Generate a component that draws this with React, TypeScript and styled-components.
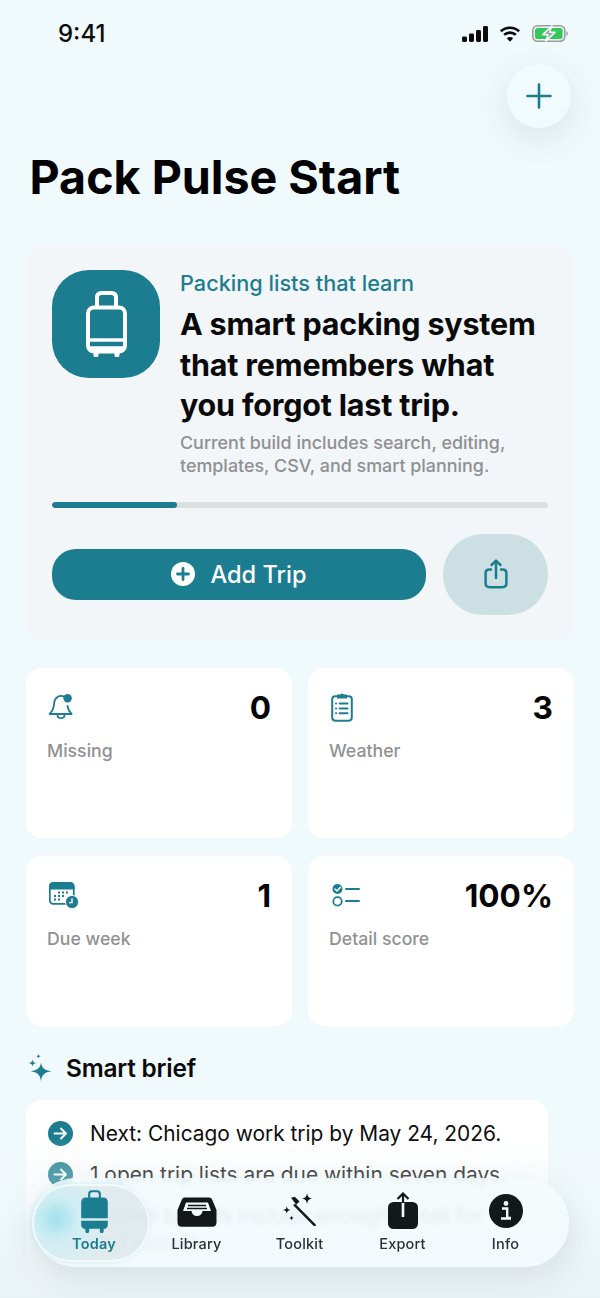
import React from "react";
import styled, { createGlobalStyle } from "styled-components";

const TEAL = "#1c7d90";
const INK = "#13191b";

const GlobalStyle = createGlobalStyle`
  html, body {
    margin: 0;
    padding: 0;
    background: #f0f9fc;
  }
  * {
    box-sizing: border-box;
  }
`;

const Screen = styled.div`
  position: relative;
  width: 600px;
  height: 1298px;
  overflow: hidden;
  background: #f0f9fc;
  font-family: Inter, "Liberation Sans", sans-serif;
  color: #000;
`;

const StatusBar = styled.div`
  display: flex;
  align-items: center;
  justify-content: space-between;
  height: 64px;
  padding: 3px 32px 0 58px;
`;

const Time = styled.span`
  font-size: 24px;
  font-weight: 500;
  line-height: 30px;
  color: #0b0b0b;
`;

const StatusIcons = styled.div`
  display: flex;
  align-items: center;
  gap: 11px;
`;

const TopRow = styled.div`
  display: flex;
  justify-content: flex-end;
  padding-right: 29px;
`;

const RoundButton = styled.div`
  display: flex;
  align-items: center;
  justify-content: center;
  width: 64px;
  height: 64px;
  border-radius: 50%;
  background: #f1fafc;
  box-shadow: 0 10px 34px rgba(60, 80, 90, 0.12);
`;

const Title = styled.h1`
  margin: 21px 0 0 0;
  padding-left: 29.5px;
  font-size: 46.6px;
  line-height: 56px;
  font-weight: 700;
`;

const Hero = styled.section`
  margin: 41px 26px 0;
  height: 394px;
  padding: 24px 26px;
  border-radius: 18px;
  background: #f3f6f8;
`;

const HeroTop = styled.div`
  display: flex;
  gap: 20px;
`;

const AppIcon = styled.div`
  display: flex;
  flex: none;
  align-items: center;
  justify-content: center;
  width: 108px;
  height: 108px;
  border-radius: 37px;
  background: ${TEAL};
`;

const HeroText = styled.div`
  display: flex;
  flex-direction: column;
`;

const Eyebrow = styled.div`
  font-size: 21.7px;
  line-height: 27px;
  font-weight: 500;
  color: ${TEAL};
`;

const Headline = styled.h2`
  margin: 7px 0 0 0;
  font-size: 30.5px;
  line-height: 40.5px;
  font-weight: 700;
  letter-spacing: -0.2px;
  color: #0a0a0a;
`;

const Note = styled.p`
  margin: 5px 0 0 0;
  font-size: 17.9px;
  line-height: 23.5px;
  font-weight: 500;
  color: #8e9093;
`;

const Track = styled.div`
  height: 6px;
  margin-top: 24px;
  border-radius: 3px;
  background: #dcdfe0;
  overflow: hidden;
`;

const Fill = styled.div`
  height: 100%;
  border-radius: 3px;
  background: ${TEAL};
`;

const Actions = styled.div`
  display: flex;
  align-items: center;
  gap: 17px;
  margin-top: 26px;
`;

const PrimaryButton = styled.div`
  display: flex;
  flex: 1;
  align-items: center;
  justify-content: center;
  gap: 15px;
  height: 51px;
  border-radius: 24px;
  background: ${TEAL};
  color: #fff;
  font-size: 23.6px;
  font-weight: 500;
`;

const ShareButton = styled.div`
  display: flex;
  flex: none;
  align-items: center;
  justify-content: center;
  width: 105px;
  height: 81px;
  border-radius: 40px;
  background: #cce0e3;
`;

const Stats = styled.div`
  display: grid;
  grid-template-columns: 266px 266px;
  grid-auto-rows: 170px;
  gap: 18px 16px;
  margin: 28px 26px 0;
`;

const StatCard = styled.div`
  padding: 20px 21px 0;
  border-radius: 16px;
  background: #fff;
`;

const StatTop = styled.div`
  display: flex;
  align-items: center;
  justify-content: space-between;
  height: 38px;
`;

const StatIcon = styled.div<{ $nudge: number }>`
  display: flex;
  margin-left: ${(p) => p.$nudge}px;
`;

const StatValue = styled.span`
  font-size: 31.6px;
  font-weight: 700;
  color: #050505;
`;

const StatLabel = styled.div`
  margin-top: 13px;
  font-size: 17.7px;
  line-height: 24px;
  font-weight: 500;
  color: #909193;
`;

const SectionHead = styled.div`
  display: flex;
  align-items: center;
  gap: 14px;
  height: 34px;
  margin: 25px 0 0 28px;
`;

const SectionTitle = styled.h3`
  margin: 0;
  font-size: 24.4px;
  font-weight: 600;
  letter-spacing: -0.2px;
  color: #0a0a0a;
`;

const BriefCard = styled.div`
  display: flex;
  flex-direction: column;
  gap: 13px;
  margin: 15px 52px 0 26px;
  height: 230px;
  padding: 20px 22px;
  border-radius: 16px;
  background: #fff;
`;

const BriefRow = styled.div`
  display: flex;
  align-items: flex-start;
  gap: 17px;
  font-size: 20.9px;
  line-height: 28px;
  color: #0d0d0d;
`;

const BadgeSlot = styled.div`
  display: flex;
  flex: none;
  margin-top: 1px;
`;

const BottomFade = styled.div`
  position: absolute;
  left: 0;
  right: 0;
  bottom: 0;
  height: 160px;
  background: linear-gradient(
    to bottom,
    rgba(240, 247, 249, 0) 0%,
    rgba(238, 244, 246, 0.25) 18%,
    rgba(236, 245, 248, 0.4) 45%,
    #e9f2f5 100%
  );
  pointer-events: none;
`;

const TabBar = styled.nav`
  position: absolute;
  left: 32px;
  top: 1178px;
  display: grid;
  grid-template-columns: 113px repeat(4, 103px);
  align-items: center;
  width: 537px;
  height: 89px;
  border-radius: 44px;
  background: rgba(243, 251, 253, 0.88);
  backdrop-filter: blur(2.5px);
  box-shadow: 0 10px 30px rgba(70, 100, 110, 0.14);
`;

const Tab = styled.div<{ $active?: boolean }>`
  position: relative;
  display: flex;
  flex-direction: column;
  align-items: center;
  justify-content: flex-end;
  width: ${(p) => (p.$active ? "118px" : "auto")};
  height: 78px;
  padding: ${(p) => (p.$active ? "0 0 9px 6px" : "0 0 9px 0")};
  border-radius: 39px;
  font-size: 14.5px;
  line-height: 18px;
  font-weight: ${(p) => (p.$active ? 600 : 500)};
  letter-spacing: 0.2px;
  color: ${(p) => (p.$active ? TEAL : "#2a3033")};
  background: ${(p) =>
    p.$active
      ? "radial-gradient(circle at 20% 45%, rgba(150, 222, 236, 0.85) 0%, rgba(190, 230, 238, 0.65) 22%, rgba(214, 226, 229, 0.6) 55%)"
      : "transparent"};
  box-shadow: ${(p) =>
    p.$active ? "inset 0 0 0 2px rgba(255, 255, 255, 0.7), -1px 0 4px rgba(150, 220, 232, 0.5)" : "none"};
`;

const TabIcon = styled.svg<{ $top?: number; $bottom: number }>`
  display: block;
  margin-top: ${(p) => p.$top ?? 0}px;
  margin-bottom: ${(p) => p.$bottom}px;
`;

const Signal = () => (
  <svg width="26" height="16" viewBox="0 0 26 16">
    <rect x="0" y="10.5" width="5" height="5.5" rx="1.4" fill="#0b0b0b" />
    <rect x="7" y="7.5" width="5" height="8.5" rx="1.4" fill="#0b0b0b" />
    <rect x="14" y="4" width="5" height="12" rx="1.4" fill="#0b0b0b" />
    <rect x="21" y="0" width="5" height="16" rx="1.4" fill="#0b0b0b" />
  </svg>
);

const Wifi = () => (
  <svg width="22" height="16" viewBox="0 0 22 17" fill="none" stroke="#0b0b0b" strokeWidth="2.8">
    <path d="M1.3 5.6C6.8 .6 15.2 .6 20.7 5.6" />
    <path d="M4.8 9.4c3.6-3.2 8.8-3.2 12.4 0" />
    <path d="M11 16.8 7.6 13c2-1.6 4.8-1.6 6.8 0z" fill="#0b0b0b" stroke="none" />
  </svg>
);

const Battery = () => (
  <svg width="36" height="17" viewBox="0 0 36 17">
    <rect x=".8" y=".8" width="32" height="15.4" rx="4.6" fill="none" stroke="#9a9d9c" strokeWidth="1.6" />
    <rect x="3" y="3" width="27.6" height="11" rx="2.6" fill="#35c759" />
    <path d="M34.4 6c1 .5 1.4 1.4 1.4 2.5s-.4 2-1.4 2.5z" fill="#9a9d9c" />
    <path d="M20 .8 10.8 9.6h5.4l-2.4 6.6 9.4-9h-5.6z" fill="#9a9d9c" stroke="#f0f9fc" strokeWidth="1.6" strokeLinejoin="round" />
  </svg>
);

const PlusIcon = () => (
  <svg width="26" height="26" viewBox="0 0 26 26" stroke={TEAL} strokeWidth="2.6" strokeLinecap="round">
    <path d="M13 1.5v23M1.5 13h23" />
  </svg>
);

const SuitcaseOutline = () => (
  <svg width="41" height="66" viewBox="0 0 41 66" fill="none" stroke="#fff">
    <path d="M11 15V6.5C11 3.5 12.8 2 15.5 2h10C28.2 2 30 3.5 30 6.5V15" strokeWidth="4" />
    <rect x="2" y="16.5" width="37" height="44" rx="6" strokeWidth="4" />
    <path d="M3 49h35" strokeWidth="3.6" />
    <path d="M3 58h35" strokeWidth="5.6" />
    <path d="M10 62v2M31 62v2" strokeLinecap="round" strokeWidth="5" />
  </svg>
);

const PlusCircle = () => (
  <svg width="24" height="24" viewBox="0 0 24 24">
    <circle cx="12" cy="12" r="12" fill="#fff" />
    <path d="M12 6.5v11M6.5 12h11" stroke={TEAL} strokeWidth="2.8" strokeLinecap="round" />
  </svg>
);

const ShareIcon = () => (
  <svg width="24" height="30" viewBox="0 0 24 30" fill="none" stroke={TEAL} strokeWidth="2.5" strokeLinecap="round" strokeLinejoin="round">
    <path d="M7 10.5H5.5c-2.4 0-3.9 1.4-3.9 3.8v10c0 2.4 1.5 3.9 3.9 3.9h13c2.4 0 3.9-1.5 3.9-3.9v-10c0-2.4-1.5-3.8-3.9-3.8H17" />
    <path d="M12 19V2M7.5 6 12 1.6 16.5 6" />
  </svg>
);

const BellIcon = () => (
  <svg width="26" height="28" viewBox="0 0 26 28" fill="none" stroke={TEAL} strokeWidth="1.8" strokeLinecap="round" strokeLinejoin="round">
    <path d="M16 3.6C11.4 1.6 6.6 4.6 6.2 10c-.3 4.4-.8 7.4-4.6 11h22c-2.6-2.6-3.6-4.6-4.1-8" />
    <path d="M9.4 21.4c0 5 7.2 5 7.2 0" />
    <circle cx="19.6" cy="5.2" r="4.2" fill={TEAL} stroke="none" />
  </svg>
);

const ClipboardIcon = () => (
  <svg width="22" height="30" viewBox="0 0 22 30" fill="none" stroke={TEAL} strokeWidth="2" strokeLinecap="round">
    <path d="M6 4.2H4.2C2.2 4.2 1.2 5.3 1.2 7.2v18.4c0 2 1 3.1 3 3.1h13.6c2 0 3-1.1 3-3.1V7.2c0-1.9-1-3-3-3H16" />
    <path d="M7 5.6V3.4h3a1 1 0 0 1 2 0h3v2.2z" fill={TEAL} />
    <path d="M8.6 11.6h8M8.6 16.4h8M8.6 21.2h8" />
    <path d="M5 11.6h.1M5 16.4h.1M5 21.2h.1" />
  </svg>
);

const CalendarIcon = () => (
  <svg width="30" height="27" viewBox="0 0 30 27">
    <rect x=".8" y=".8" width="24" height="21" rx="3.6" fill="none" stroke={TEAL} strokeWidth="1.8" />
    <path d="M.8 7V4.4C.8 2 2 .8 4.4.8h16.8c2.4 0 3.6 1.2 3.6 3.6V7z" fill={TEAL} stroke={TEAL} strokeWidth="1" />
    <g fill={TEAL}>
      <rect x="9" y="9.5" width="2" height="2" />
      <rect x="13" y="9.5" width="2" height="2" />
      <rect x="17" y="9.5" width="2" height="2" />
      <rect x="5" y="13" width="2" height="2" />
      <rect x="9" y="13" width="2" height="2" />
      <rect x="13" y="13" width="2" height="2" />
      <rect x="5" y="16.5" width="2" height="2" />
      <rect x="9" y="16.5" width="2" height="2" />
    </g>
    <circle cx="23" cy="20" r="6.6" fill={TEAL} stroke="#fff" strokeWidth="1" />
    <path d="M23 16.5V20.6h-3" fill="none" stroke="#fff" strokeWidth="1.4" />
  </svg>
);

const ChecklistIcon = () => (
  <svg width="28" height="24" viewBox="0 0 28 24" fill="none">
    <circle cx="5.5" cy="6" r="5" fill={TEAL} />
    <path d="M3 6l2 2 3.2-3.6" stroke="#fff" strokeWidth="1.5" strokeLinecap="round" />
    <circle cx="5.5" cy="18.4" r="4.2" stroke={TEAL} strokeWidth="1.8" />
    <path d="M14 6h13M14 18h13" stroke={TEAL} strokeWidth="2" strokeLinecap="round" />
  </svg>
);

const SparkleIcon = () => (
  <svg width="24" height="28" viewBox="0 0 24 28" fill={TEAL}>
    <path d="M13 8.5c.8 5.4 3.4 7.8 10.500 8.700-7 .9-9.700 3.400-10.500 10.200-.8-6.800-3.500-9.300-10.500-10.200C9.600 16.300 12.200 13.900 13 8.500z" />
    <path d="M4.500 5.500c.3 2.300 1.300 3.200 4 3.600-2.700.4-3.700 1.300-4 3.600-.3-2.300-1.300-3.200-4-3.600 2.700-.4 3.700-1.300 4-3.600z" />
    <path d="M10.500 0c.2 1.400.8 2 2.400 2.200-1.600.2-2.200.8-2.400 2.200-.2-1.400-.8-2-2.400-2.200 1.600-.2 2.200-.8 2.400-2.200z" />
  </svg>
);

const ArrowBadge = () => (
  <BadgeSlot>
    <svg width="25" height="25" viewBox="0 0 25 25">
      <circle cx="12.5" cy="12.5" r="12.5" fill={TEAL} />
      <path d="M6.5 12.5h11.5M13 7.5l5 5-5 5" fill="none" stroke="#fff" strokeWidth="1.9" strokeLinecap="round" strokeLinejoin="round" />
    </svg>
  </BadgeSlot>
);

const TabSuitcase = () => (
  <TabIcon width="27" height="43" viewBox="0 0 28 44" $bottom={2}>
    <path d="M8.5 8V3.8C8.5 2 9.8 1 11.3 1h5.4c1.5 0 2.8 1 2.8 2.8V8" fill="none" stroke={TEAL} strokeWidth="2.2" />
    <path d="M5 7.5h18c3 0 4.8 1.8 4.8 4.8V29H.2V12.3C.2 9.3 2 7.5 5 7.5z" fill={TEAL} />
    <path d="M.2 31.5h27.6v4.2c0 2.8-1.6 4.3-4.4 4.3H4.6C1.8 40 .2 38.5 .2 35.7z" fill={TEAL} />
    <path d="M6.5 40v2.500M21.500 40v2.500" stroke={TEAL} strokeWidth="4" strokeLinecap="round" />
  </TabIcon>
);

const TabInbox = () => (
  <TabIcon width="40" height="30" viewBox="0 0 40 30" $top={9} $bottom={8}>
    <path d="M8 .5h24c1.600 0 2.600.7 3.200 2.200L39.500 13v12.500c0 2.800-1.500 4.300-4.300 4.300H4.800C2 29.800.5 28.300.5 25.500V13L4.800 2.700C5.400 1.200 6.400.5 8 .5z" fill={INK} />
    <path d="M6 14 9 5.500h22L34 14h-8.500c-.5 3.200-2.500 5-5.500 5s-5-1.800-5.500-5z" fill="#f3fbfd" />
    <path d="M11 8.500h18M10 11.500h20" stroke={INK} strokeWidth="1.5" />
  </TabIcon>
);

const TabWand = () => (
  <TabIcon width="34" height="34" viewBox="1.5 0 36 36" $top={3} $bottom={9}>
    <path d="M35 35 14 14" stroke={INK} strokeWidth="2.6" strokeLinecap="round" />
    <path d="M10 6l4-1 5 5-3.500 3.500z" fill={INK} />
    <path d="M27 1c.5 4 2 5.500 6 6-4 .5-5.500 2-6 6-.5-4-2-5.500-6-6 4-.5 5.500-2 6-6z" fill={INK} />
    <path d="M5.500 15c.4 2.600 1.400 3.600 4 4-2.600.4-3.600 1.400-4 4-.4-2.600-1.400-3.600-4-4 2.600-.4 3.600-1.400 4-4z" fill={INK} />
    <path d="M10.500 25c.3 1.700.9 2.300 2.600 2.600-1.700.3-2.300.9-2.600 2.600-.3-1.700-.9-2.300-2.600-2.600 1.700-.3 2.300-.9 2.600-2.600z" fill={INK} />
  </TabIcon>
);

const TabExport = () => (
  <TabIcon width="30" height="38" viewBox="0 0 30 38" $bottom={5}>
    <rect y="10" width="30" height="27" rx="5.5" fill={INK} />
    <path d="M15 25V2" stroke="#f3fbfd" strokeWidth="2.6" />
    <path d="M15 11V2M9.500 7 15 1.500 20.500 7" fill="none" stroke={INK} strokeWidth="2.2" />
  </TabIcon>
);

const TabInfo = () => (
  <TabIcon width="34" height="34" viewBox="0 0 34 34" $top={3} $bottom={7}>
    <circle cx="17" cy="17" r="17" fill={INK} />
    <circle cx="17" cy="9.5" r="2.4" fill="#f3fbfd" />
    <path d="M13 14.500h5.200V24H22M12 24.500h10" fill="none" stroke="#f3fbfd" strokeWidth="2.4" />
  </TabIcon>
);

const App = () => {
  return (
    <Screen>
      <GlobalStyle />
      <StatusBar>
        <Time>9:41</Time>
        <StatusIcons>
          <Signal />
          <Wifi />
          <Battery />
        </StatusIcons>
      </StatusBar>
      <TopRow>
        <RoundButton>
          <PlusIcon />
        </RoundButton>
      </TopRow>
      <Title>Pack Pulse Start</Title>
      <Hero>
        <HeroTop>
          <AppIcon>
            <SuitcaseOutline />
          </AppIcon>
          <HeroText>
            <Eyebrow>Packing lists that learn</Eyebrow>
            <Headline>
              A smart packing system
              <br />
              that remembers what
              <br />
              you forgot last trip.
            </Headline>
            <Note>
              Current build includes search, editing,
              <br />
              templates, CSV, and smart planning.
            </Note>
          </HeroText>
        </HeroTop>
        <Track>
          <Fill style={{ width: "25.2%" }} />
        </Track>
        <Actions>
          <PrimaryButton>
            <PlusCircle />
            Add Trip
          </PrimaryButton>
          <ShareButton>
            <ShareIcon />
          </ShareButton>
        </Actions>
      </Hero>
      <Stats>
        <StatCard>
          <StatTop>
            <StatIcon $nudge={1}>
              <BellIcon />
            </StatIcon>
            <StatValue>0</StatValue>
          </StatTop>
          <StatLabel>Missing</StatLabel>
        </StatCard>
        <StatCard>
          <StatTop>
            <StatIcon $nudge={2}>
              <ClipboardIcon />
            </StatIcon>
            <StatValue>3</StatValue>
          </StatTop>
          <StatLabel>Weather</StatLabel>
        </StatCard>
        <StatCard>
          <StatTop>
            <StatIcon $nudge={2}>
              <CalendarIcon />
            </StatIcon>
            <StatValue>1</StatValue>
          </StatTop>
          <StatLabel>Due week</StatLabel>
        </StatCard>
        <StatCard>
          <StatTop>
            <StatIcon $nudge={3}>
              <ChecklistIcon />
            </StatIcon>
            <StatValue>100%</StatValue>
          </StatTop>
          <StatLabel>Detail score</StatLabel>
        </StatCard>
      </Stats>
      <SectionHead>
        <SparkleIcon />
        <SectionTitle>Smart brief</SectionTitle>
      </SectionHead>
      <BriefCard>
        <BriefRow>
          <ArrowBadge />
          Next: Chicago work trip by May 24, 2026.
        </BriefRow>
        <BriefRow>
          <ArrowBadge />
          1 open trip lists are due within seven days.
        </BriefRow>
        <BriefRow>
          <ArrowBadge />
          School boards include enough detail for fast export.
        </BriefRow>
      </BriefCard>
      <BottomFade />
      <TabBar>
        <Tab $active>
          <TabSuitcase />
          Today
        </Tab>
        <Tab>
          <TabInbox />
          Library
        </Tab>
        <Tab>
          <TabWand />
          Toolkit
        </Tab>
        <Tab>
          <TabExport />
          Export
        </Tab>
        <Tab>
          <TabInfo />
          Info
        </Tab>
      </TabBar>
    </Screen>
  );
};

export default App;
